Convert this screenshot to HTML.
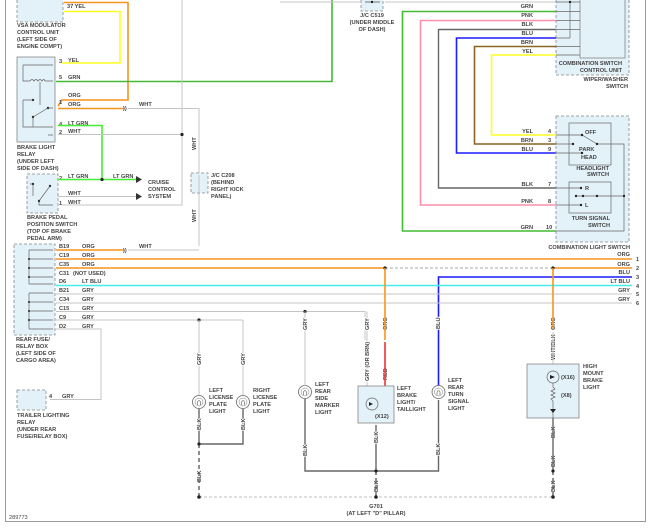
<!DOCTYPE html>
<html><head><meta charset="utf-8"><style>
html,body{margin:0;padding:0;background:#fff;}
svg{display:block;}
text{font-family:"Liberation Sans",sans-serif;font-size:5.6px;font-weight:bold;fill:#444;}
.v{stroke:#fff;stroke-width:2;paint-order:stroke;}
.w{fill:none;stroke-width:1.6;}
.g{stroke:#c4c4c4;fill:none;stroke-width:1;}
.k{stroke:#666;fill:none;stroke-width:1.4;}
.box{fill:#e3f1f8;stroke:#888;stroke-width:0.8;stroke-dasharray:3,2;}
.sb{fill:#e3f1f8;stroke:#888;stroke-width:0.8;}
.in{fill:none;stroke:#666;stroke-width:0.7;}
</style></head><body>
<svg width="650" height="530" viewBox="0 0 650 530" xmlns="http://www.w3.org/2000/svg">
<defs>
<g id="lamp"><circle r="6.5" fill="#fff" stroke="#666" stroke-width="0.8"/><circle r="4" fill="none" stroke="#777" stroke-width="0.5"/><path d="M-1.5 3 V0 q1.5 -3 3 0 V3" fill="none" stroke="#555" stroke-width="0.6"/></g>
</defs>
<path d="M5.5 0 V521.5 H645.5 V0" fill="none" stroke="#999" stroke-width="1"/>

<rect x="17" y="-2" width="46" height="24" class="box"/>
<text x="17" y="27">VSA MODULATOR</text><text x="17" y="34">CONTROL UNIT</text><text x="17" y="41">(LEFT SIDE OF</text><text x="17" y="48">ENGINE COMPT)</text>
<text x="67" y="8">37  YEL</text>
<path d="M64 2.5 H128 V100 H62 L58 106" class="w" stroke="#f7941d"/>
<path d="M64 11.5 H120 V63 H62" class="w" stroke="#ffff22"/>

<rect x="17" y="57" width="38" height="85" class="sb"/>
<path d="M23 65 V81 H30 M45 81 H53 M23 65 H53 M40 82 V105 M23 100 V127 H53 M23 100 H33 M33 117 L48 108 H53 M33 117 V127 M48 135 H53" class="in"/>
<path d="M30 81 q2 -3 4 0 q2 -3 4 0 q2 -3 4 0 q2 -3 3 0" class="in"/>
<circle cx="33" cy="100" r="1.2" fill="#333"/><circle cx="33" cy="117" r="1.2" fill="#333"/><circle cx="48" cy="108" r="1.2" fill="#333"/>
<text x="17" y="149">BRAKE LIGHT</text><text x="17" y="156">RELAY</text><text x="17" y="163">(UNDER LEFT</text><text x="17" y="170">SIDE OF DASH)</text>
<text x="59" y="63">3</text><text x="68" y="62">YEL</text>
<text x="59" y="79">5</text><text x="68" y="79">GRN</text>
<path d="M56 81.5 H332 V0" class="w" stroke="#44bb33"/>
<text x="68" y="97">ORG</text><text x="59" y="104">1</text><text x="68" y="106">ORG</text>
<path d="M58 108.5 H124" class="w" stroke="#f7941d"/>
<text x="123" y="110">))</text>
<path d="M128 108.5 H199 V175 M199 193 V246" class="g"/>
<text x="139" y="106">WHT</text>
<text x="59" y="126">4</text><text x="68" y="125">LT GRN</text>
<path d="M58 125.5 H102 V179.5" class="w" stroke="#44ee33"/>
<text x="59" y="134">2</text><text x="68" y="133">WHT</text>
<path d="M58 134.5 H182 M182 0 V205 H62" class="g"/>
<circle cx="182" cy="134.5" r="1.6" fill="#222"/>
<text transform="translate(196,150) rotate(-90)">WHT</text>
<text transform="translate(196,222) rotate(-90)">WHT</text>

<rect x="191" y="173" width="17" height="20" class="box"/>
<path d="M199 175 V193" class="g"/>
<text x="211" y="177">J/C C208</text><text x="211" y="184">(BEHIND</text><text x="211" y="191">RIGHT KICK</text><text x="211" y="198">PANEL)</text>

<rect x="27" y="174" width="31" height="39" class="box"/>
<path d="M33 184 V196 M39 201 L50 186 M39 201 V205 H53 M33 184 H30" class="in"/>
<circle cx="33" cy="184" r="1.2" fill="#333"/><circle cx="39" cy="201" r="1.2" fill="#333"/><circle cx="50" cy="186" r="1.2" fill="#333"/>
<text x="59" y="180">2</text><text x="68" y="178">LT GRN</text><text x="113" y="178">LT GRN</text>
<path d="M58 179.5 H140" class="w" stroke="#44ee33"/>
<circle cx="102" cy="179.5" r="1.6" fill="#222"/>
<path d="M58 196.5 H140" class="g"/>
<path d="M136 176 L142 179.5 L136 183Z M136 193 L142 196.5 L136 200Z" fill="#333"/>
<text x="68" y="195">WHT</text><text x="59" y="205">1</text><text x="68" y="204">WHT</text>
<text x="148" y="184">CRUISE</text><text x="148" y="191">CONTROL</text><text x="148" y="198">SYSTEM</text>
<text x="27" y="219">BRAKE PEDAL</text><text x="27" y="226">POSITION SWITCH</text><text x="27" y="233">(TOP OF BRAKE</text><text x="27" y="240">PEDAL ARM)</text>

<path d="M280 2 H360 M385 2 H555" class="g"/>
<rect x="361" y="-2" width="22" height="13" class="box"/>
<path d="M365 2 H380" stroke="#444" stroke-width="0.7"/><circle cx="372" cy="2" r="1.2" fill="#222"/>
<text x="372" y="17" text-anchor="middle">J/C C519</text><text x="372" y="24" text-anchor="middle">(UNDER MIDDLE</text><text x="372" y="31" text-anchor="middle">OF DASH)</text>

<rect x="556" y="-2" width="73" height="77" class="box"/>
<rect x="580" y="-2" width="45" height="60" class="sb"/>
<path d="M556 2 H570 V38 M567 2 H580 M556 11.5 H580 M556 20.5 H580 M556 29.5 H580 M556 38 H570 M556 46.5 H580 M556 55 H580" class="in"/>
<circle cx="570" cy="2" r="1.2" fill="#222"/>
<text x="622" y="65" text-anchor="end">COMBINATION SWITCH</text><text x="622" y="72" text-anchor="end">CONTROL UNIT</text>
<text x="628" y="81" text-anchor="end">WIPER/WASHER</text><text x="628" y="88" text-anchor="end">SWITCH</text>
<text x="533" y="8" text-anchor="end">GRN</text><text x="533" y="17" text-anchor="end">PNK</text><text x="533" y="26" text-anchor="end">BLK</text><text x="533" y="35" text-anchor="end">BLU</text><text x="533" y="44" text-anchor="end">BRN</text><text x="533" y="53" text-anchor="end">YEL</text>
<path d="M556 11.5 H402.5 V231 H556" class="w" stroke="#44bb33"/>
<path d="M556 20.5 H420.5 V205 H556" class="w" stroke="#ff8faa"/>
<path d="M556 29.5 H438.5 V188 H556" class="k"/>
<path d="M556 38 H456.5 V153 H556" class="w" stroke="#1c1cff"/>
<path d="M556 46.5 H474.5 V144 H556" class="w" stroke="#8b6420"/>
<path d="M556 55 H491.5 V135 H556" class="w" stroke="#ffff22"/>
<text x="533" y="133" text-anchor="end">YEL</text><text x="533" y="142" text-anchor="end">BRN</text><text x="533" y="151" text-anchor="end">BLU</text>
<text x="533" y="186" text-anchor="end">BLK</text><text x="533" y="203" text-anchor="end">PNK</text><text x="533" y="229" text-anchor="end">GRN</text>
<text x="548" y="133">4</text><text x="548" y="142">3</text><text x="548" y="151">9</text><text x="548" y="186">7</text><text x="548" y="203">8</text><text x="546" y="229">10</text>

<rect x="556" y="116" width="73" height="126" class="box"/>
<rect x="569" y="123" width="42" height="42" fill="none" stroke="#666" stroke-width="0.7"/>
<rect x="569" y="182" width="42" height="31" fill="none" stroke="#666" stroke-width="0.7"/>
<path d="M556 135 H582 L597 144 M556 144 H573 M556 153 H582 M597 144 H624 V231 H556 M556 188 H581 M556 205 H581 M576 196 H624" class="in"/>
<g fill="#222"><circle cx="582" cy="135" r="1.2"/><circle cx="597" cy="144" r="1.2"/><circle cx="573" cy="144" r="1.2"/><circle cx="582" cy="153" r="1.2"/><circle cx="581" cy="188" r="1.2"/><circle cx="581" cy="205" r="1.2"/><circle cx="576" cy="196" r="1.2"/><circle cx="583" cy="196" r="1.2"/><circle cx="597" cy="196" r="1.2"/><circle cx="624" cy="196" r="1.2"/></g>
<text x="585" y="134">OFF</text><text x="579" y="151">PARK</text><text x="581" y="159">HEAD</text>
<text x="585" y="190">R</text><text x="585" y="207">L</text>
<text x="609" y="170" text-anchor="end">HEADLIGHT</text><text x="609" y="176" text-anchor="end">SWITCH</text>
<text x="610" y="220" text-anchor="end">TURN SIGNAL</text><text x="610" y="227" text-anchor="end">SWITCH</text>
<text x="630" y="249" text-anchor="end">COMBINATION LIGHT SWITCH</text>

<rect x="14" y="244" width="41" height="91" class="box"/>
<path d="M29 250 V284 M29 293 V329 M29 250 H53 M29 259 H53 M29 268 H53 M29 277 H53 M29 284 H53 M29 293 H53 M29 302 H53 M29 311 H53 M29 320 H53 M29 329 H53" class="in" stroke="#555"/>
<g fill="#222"><circle cx="29" cy="259" r="1"/><circle cx="29" cy="268" r="1"/><circle cx="29" cy="277" r="1"/><circle cx="29" cy="302" r="1"/><circle cx="29" cy="311" r="1"/><circle cx="29" cy="320" r="1"/></g>
<text x="16" y="341">REAR FUSE/</text><text x="16" y="348">RELAY BOX</text><text x="16" y="355">(LEFT SIDE OF</text><text x="16" y="362">CARGO AREA)</text>
<g>
<text x="59" y="248">B19</text><text x="82" y="248">ORG</text>
<text x="59" y="257">C19</text><text x="82" y="257">ORG</text>
<text x="59" y="266">C35</text><text x="82" y="266">ORG</text>
<text x="59" y="275">C31</text><text x="73" y="275">(NOT USED)</text>
<text x="59" y="283">D6</text><text x="82" y="283">LT BLU</text>
<text x="59" y="292">B21</text><text x="82" y="292">GRY</text>
<text x="59" y="301">C34</text><text x="82" y="301">GRY</text>
<text x="59" y="310">C15</text><text x="82" y="310">GRY</text>
<text x="59" y="319">C9</text><text x="82" y="319">GRY</text>
<text x="59" y="328">D2</text><text x="82" y="328">GRY</text>
</g>
<path d="M56 250 H124" class="w" stroke="#f7941d"/><text x="123" y="252">))</text>
<path d="M128 250 H199" class="g"/><text x="139" y="248">WHT</text>
<path d="M56 259 H632" class="w" stroke="#f7941d"/>
<path d="M56 268 H385 M553 268 H632" class="w" stroke="#f7941d"/>
<path d="M385 268 H553" stroke="#aaa" stroke-width="1" stroke-dasharray="3,2"/>
<path d="M438.5 386 V277 H632" class="w" stroke="#1c1cff"/>
<path d="M56 285.5 H632" class="w" stroke="#44eeee"/>
<path d="M56 294 H632 M56 303 H632" class="g" stroke-width="1.2"/>
<path d="M56 311.5 H365 V340 M56 320 H243 M56 329 H101 V399.5 H50" class="g"/>
<g fill="#222"><circle cx="385" cy="268" r="1.6"/><circle cx="553" cy="268" r="1.6"/><circle cx="305" cy="311.5" r="1.6"/><circle cx="199" cy="320" r="1.6"/></g>
<g text-anchor="end"><text x="630" y="256">ORG</text><text x="630" y="266">ORG</text><text x="630" y="274">BLU</text><text x="630" y="283">LT BLU</text><text x="630" y="292">GRY</text><text x="630" y="301">GRY</text></g>
<text x="636" y="261">1</text><text x="636" y="270">2</text><text x="636" y="279">3</text><text x="636" y="288">4</text><text x="636" y="296">5</text><text x="636" y="305">6</text>

<rect x="17" y="390" width="29" height="20" class="box"/>
<text x="49" y="398">4</text><text x="62" y="398">GRY</text>
<text x="17" y="417">TRAILER LIGHTING</text><text x="17" y="424">RELAY</text><text x="17" y="431">(UNDER REAR</text><text x="17" y="438">FUSE/RELAY BOX)</text>

<path d="M199 320 V395 M243 320 V395" class="g"/>
<path d="M199 409 V444 H243 V409 M305 399 V471 H438.5 V400 M376 425 V471" class="k"/>
<use href="#lamp" x="199" y="402"/><use href="#lamp" x="243" y="402"/><use href="#lamp" x="305" y="392"/><use href="#lamp" x="438.5" y="392"/>
<path d="M305 311.5 V386 M367 311.5 V386" class="g"/>
<g class="v">
<text transform="translate(201,365) rotate(-90)">GRY</text><text transform="translate(245,365) rotate(-90)">GRY</text>
<text transform="translate(201,430) rotate(-90)">BLK</text><text transform="translate(245,430) rotate(-90)">BLK</text>
<text transform="translate(201,482) rotate(-90)">BLK</text>
<text transform="translate(307,330) rotate(-90)">GRY</text><text transform="translate(307,456) rotate(-90)">BLK</text>
<text transform="translate(369,330) rotate(-90)">GRY</text><text transform="translate(369,381) rotate(-90)">GRY (OR BRN)</text>
<text transform="translate(387,330) rotate(-90)">ORG</text><text transform="translate(387,380) rotate(-90)">RED</text>
<text transform="translate(440,329) rotate(-90)">BLU</text><text transform="translate(440,455) rotate(-90)">BLK</text>
<text transform="translate(378,443) rotate(-90)">BLK</text><text transform="translate(378,492) rotate(-90)">BLK</text>
<text transform="translate(555,330) rotate(-90)">ORG</text><text transform="translate(555,360) rotate(-90)">WHT/BLK</text>
<text transform="translate(555,438) rotate(-90)">BLK</text><text transform="translate(555,467) rotate(-90)">BLK</text><text transform="translate(555,492) rotate(-90)">BLK</text>
</g>
<text x="209" y="392">LEFT</text><text x="209" y="399">LICENSE</text><text x="209" y="406">PLATE</text><text x="209" y="413">LIGHT</text>
<text x="253" y="392">RIGHT</text><text x="253" y="399">LICENSE</text><text x="253" y="406">PLATE</text><text x="253" y="413">LIGHT</text>
<text x="315" y="386">LEFT</text><text x="315" y="393">REAR</text><text x="315" y="400">SIDE</text><text x="315" y="407">MARKER</text><text x="315" y="414">LIGHT</text>
<text x="397" y="390">LEFT</text><text x="397" y="397">BRAKE</text><text x="397" y="404">LIGHT/</text><text x="397" y="411">TAILLIGHT</text>
<text x="448" y="382">LEFT</text><text x="448" y="389">REAR</text><text x="448" y="396">TURN</text><text x="448" y="403">SIGNAL</text><text x="448" y="410">LIGHT</text>

<path d="M385 268 V340" class="w" stroke="#f7941d"/>
<path d="M385 342 V386" class="w" stroke="#ee3333"/>
<rect x="358" y="386" width="36" height="37" class="sb"/>
<circle cx="372" cy="404" r="6" fill="none" stroke="#666" stroke-width="0.7"/>
<path d="M369 402 L373 404 L369 406Z" fill="#222"/>
<text x="375" y="418">(X12)</text>
<path d="M553 268 V329" class="w" stroke="#f7941d"/>
<path d="M553 332 V364" class="g"/>
<rect x="527" y="364" width="52" height="54" class="sb"/>
<circle cx="553" cy="377" r="6" fill="none" stroke="#666" stroke-width="0.7"/>
<path d="M550 375 L555 377 L550 379Z" fill="#222"/>
<path d="M553 383 V387 l2 2 l-4 2 l4 2 l-4 2 l4 2 l-4 2 l2 2 V418" class="in"/>
<path d="M550 409 H556 L553 413Z" fill="#222"/>
<text x="561" y="379">(X16)</text><text x="561" y="397">(X8)</text>
<text x="583" y="368">HIGH</text><text x="583" y="375">MOUNT</text><text x="583" y="382">BRAKE</text><text x="583" y="389">LIGHT</text>
<path d="M553 418 V471" class="k"/>

<path d="M199 444 V497 M376 471 V497 M553 471 V497" stroke="#444" stroke-width="1.2" stroke-dasharray="4,3"/>
<path d="M199 497 H553" stroke="#aaa" stroke-width="0.8" stroke-dasharray="3,2"/>
<g fill="#222"><circle cx="199" cy="444" r="1.6"/><circle cx="376" cy="471" r="1.6"/><circle cx="553" cy="471" r="1.6"/><circle cx="199" cy="497" r="1.8"/><circle cx="376" cy="497" r="1.8"/><circle cx="553" cy="497" r="1.8"/></g>
<text x="376" y="508" text-anchor="middle">G701</text><text x="376" y="515" text-anchor="middle">(AT LEFT "D" PILLAR)</text>
<text x="9" y="519" style="font-weight:normal">289773</text>
</svg>
</body></html>
